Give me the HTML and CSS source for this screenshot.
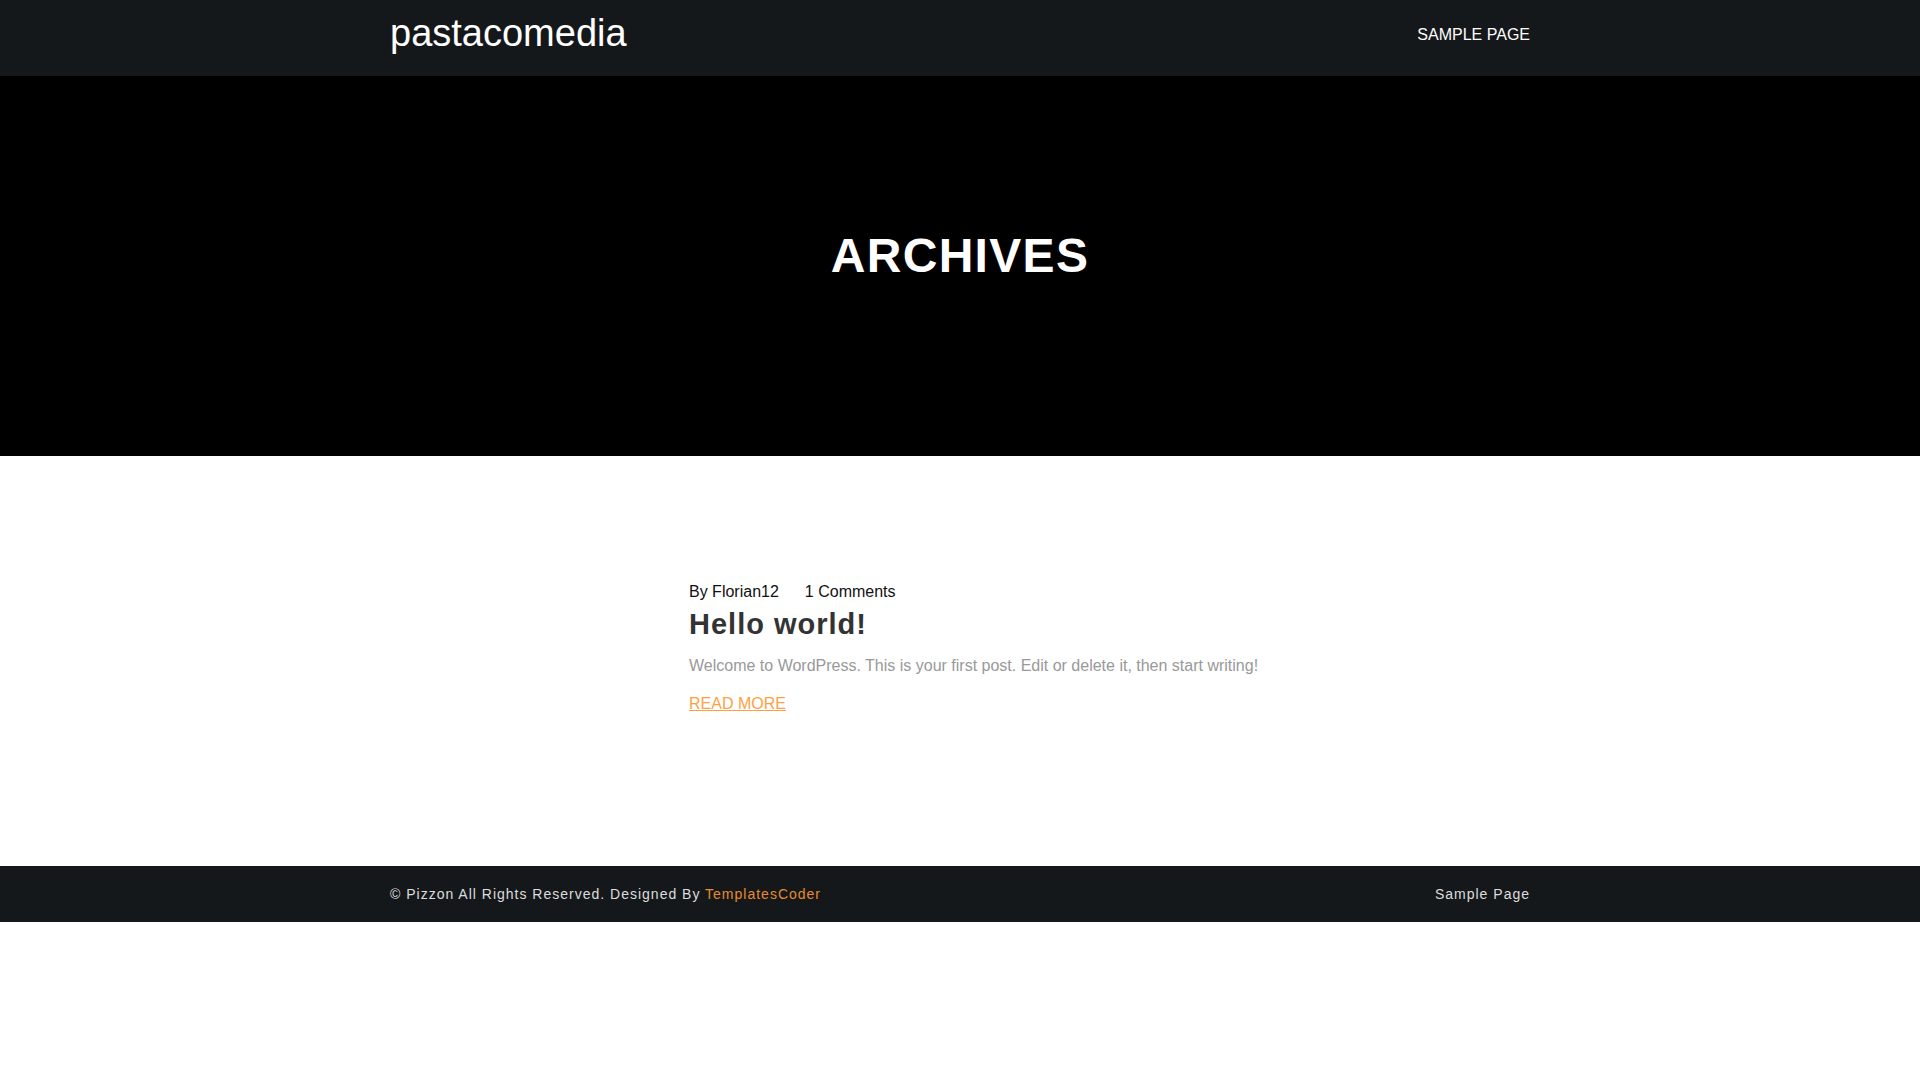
FILE: index.html
```
<!DOCTYPE html>
<html lang="en">
<head>
    <meta charset="UTF-8">
    <title>Archives - pastacomedia</title>
    <link rel="stylesheet" href="styles.css">
</head>
<body>
    <header class="site-header">
        <div class="container header-inner">
            <a class="logo" href="#">pastacomedia</a>
            <nav class="main-nav">
                <a href="#">SAMPLE PAGE</a>
            </nav>
        </div>
    </header>

    <section class="page-banner">
        <h1>ARCHIVES</h1>
    </section>

    <section class="posts">
        <div class="container">
            <article class="post">
                <div class="post-meta">
                    <span>By Florian12</span>
                    <span>1 Comments</span>
                </div>
                <h2 class="post-title">Hello world!</h2>
                <p class="post-excerpt">Welcome to WordPress. This is your first post. Edit or delete it, then start writing!</p>
                <a class="read-more" href="#">READ MORE</a>
            </article>
        </div>
    </section>

    <footer class="site-footer">
        <div class="container footer-inner">
            <p>© Pizzon All Rights Reserved. Designed By <a href="#">TemplatesCoder</a></p>
            <a class="footer-link" href="#">Sample Page</a>
        </div>
    </footer>
</body>
</html>
```

FILE: styles.css
```
body {
    margin: 0;
    font-family: "Liberation Sans", Arial, sans-serif;
    background: #fff;
    color: #333;
}
a {
    text-decoration: none;
}
.container {
    width: 1140px;
    margin: 0 auto;
}
.site-header {
    background: #15181b;
    height: 76px;
    box-sizing: border-box;
    padding-top: 11px;
}
.header-inner {
    display: flex;
    justify-content: space-between;
    align-items: flex-start;
}
.logo {
    color: #fff;
    font-size: 38px;
    line-height: 1.2;
}
.main-nav {
    padding-top: 12px;
}
.main-nav a {
    color: #fff;
    font-size: 16px;
    line-height: 1.5;
}
.page-banner {
    background: #000;
    padding: 151px 0 171px;
    text-align: center;
}
.page-banner h1 {
    margin: 0;
    color: #fff;
    font-size: 48px;
    line-height: 1.2;
    letter-spacing: 1.3px;
}
.posts {
    padding: 124px 0 150px;
}
.post {
    width: 620px;
    margin-left: 299px;
}
.post-meta {
    display: flex;
    gap: 26px;
    font-size: 16px;
    line-height: 1.5;
    color: #111;
}
.post-title {
    margin: 3px 0 13px;
    font-size: 29px;
    line-height: 1.2;
    letter-spacing: 1px;
    color: #333;
}
.post-excerpt {
    margin: 0 0 14px;
    font-size: 16px;
    line-height: 1.5;
    color: #999;
}
.read-more {
    display: inline-block;
    font-size: 16px;
    line-height: 1.5;
    color: #ff9f43;
    text-decoration: underline;
}
.site-footer {
    background: #15181b;
    height: 56px;
    box-sizing: border-box;
    padding-top: 18px;
}
.footer-inner {
    display: flex;
    justify-content: space-between;
    font-size: 14px;
    line-height: 1.5;
    letter-spacing: 1px;
    color: #ddd;
}
.footer-inner p {
    margin: 0;
}
.footer-inner p a {
    color: #e88a2e;
}
.footer-link {
    color: #ddd;
}
```
